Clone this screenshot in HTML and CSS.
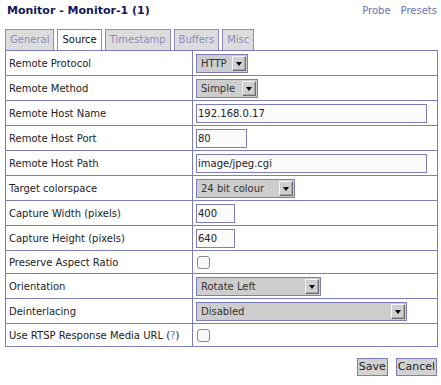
FILE: index.html
```html
<!DOCTYPE html>
<html lang="en">

<head>
  <meta charset="UTF-8">
  <title>ZM - Monitor - Monitor-1</title>
  <link rel="stylesheet" href="styles.css">
</head>

<body>
  <div class="page">
    <div class="header">
      <h2>Monitor - Monitor-1 (1)</h2>
      <div class="links">
        <a href="#">Probe</a>
        <a href="#">Presets</a>
      </div>
    </div>
    <ul class="tabs">
      <li><a href="#">General</a></li>
      <li class="active"><a href="#">Source</a></li>
      <li><a href="#">Timestamp</a></li>
      <li><a href="#">Buffers</a></li>
      <li><a href="#">Misc</a></li>
    </ul>
    <form>
      <table class="content">
        <tr>
          <td class="label">Remote Protocol</td>
          <td>
            <span class="select w-protocol"><select><option>HTTP</option><option>RTSP</option></select></span>
          </td>
        </tr>
        <tr>
          <td class="label">Remote Method</td>
          <td>
            <span class="select w-method"><select><option>Simple</option><option>Regexp</option></select></span>
          </td>
        </tr>
        <tr>
          <td class="label">Remote Host Name</td>
          <td><input type="text" class="w-long" value="192.168.0.17"></td>
        </tr>
        <tr>
          <td class="label">Remote Host Port</td>
          <td><input type="text" class="w-port" value="80"></td>
        </tr>
        <tr>
          <td class="label">Remote Host Path</td>
          <td><input type="text" class="w-long" value="image/jpeg.cgi"></td>
        </tr>
        <tr>
          <td class="label">Target colorspace</td>
          <td>
            <span class="select w-colour"><select><option>24 bit colour</option><option>8 bit grey</option><option>32 bit colour</option></select></span>
          </td>
        </tr>
        <tr>
          <td class="label">Capture Width (pixels)</td>
          <td><input type="text" class="w-size" value="400"></td>
        </tr>
        <tr>
          <td class="label">Capture Height (pixels)</td>
          <td><input type="text" class="w-size" value="640"></td>
        </tr>
        <tr>
          <td class="label">Preserve Aspect Ratio</td>
          <td><input type="checkbox"></td>
        </tr>
        <tr>
          <td class="label">Orientation</td>
          <td>
            <span class="select w-orient"><select><option>Rotate Left</option><option>Normal</option><option>Rotate Right</option></select></span>
          </td>
        </tr>
        <tr>
          <td class="label">Deinterlacing</td>
          <td>
            <span class="select w-deint"><select><option>Disabled</option><option>Four field motion adaptive</option></select></span>
          </td>
        </tr>
        <tr>
          <td class="label">Use RTSP Response Media URL (<a href="#">?</a>)</td>
          <td><input type="checkbox"></td>
        </tr>
      </table>
      <div class="buttons">
        <button type="submit">Save</button>
        <button type="button">Cancel</button>
      </div>
    </form>
  </div>
</body>

</html>
```

FILE: styles.css
```css
body {
  margin: 0;
  font-family: "DejaVu Sans", Verdana, sans-serif;
  font-size: 10px;
  color: #222;
  background-color: white;
}

a {
  color: #6a72b4;
  text-decoration: none;
}

.page {
  padding: 0 4px 0 5px;
}

.header {
  display: flex;
  justify-content: space-between;
  align-items: center;
  height: 20px;
}

.header h2 {
  margin: 0;
  padding-left: 2px;
  font-size: 11px;
  font-weight: bold;
  color: #16165a;
}

.links {
  display: flex;
  gap: 10px;
}

.tabs {
  display: flex;
  gap: 3px;
  list-style: none;
  margin: 9px 0 0;
  padding: 0;
}

.tabs li {
  border: 1px solid #8c8cc0;
  border-bottom: none;
  background-color: #dcdcdc;
  line-height: 20px;
  padding: 0 4px;
}

.tabs li a {
  color: #8c8cc0;
}

.tabs li.active {
  background-color: white;
}

.tabs li.active a {
  color: #111;
}

.content {
  width: 433px;
  border-collapse: collapse;
}

.content td {
  border: 1px solid #7d7dbb;
  padding: 3px 3px 2px;
  vertical-align: middle;
}

.content td.label {
  width: 180px;
}

input[type="text"] {
  display: block;
  box-sizing: border-box;
  height: 19px;
  margin: 0;
  padding: 0 1px;
  border: 1px solid #7d7dbb;
  background-color: #fbfbfb;
  font-family: inherit;
  font-size: 10px;
  color: #222;
}

input[type="checkbox"] {
  display: block;
  appearance: none;
  box-sizing: border-box;
  width: 13px;
  height: 13px;
  margin: 2px 1px;
  border: 1px solid #8a8a8a;
  border-radius: 3px;
  background-color: #f8f8f8;
}

.select {
  position: relative;
  display: block;
  box-sizing: border-box;
  height: 19px;
}

.select select {
  appearance: none;
  box-sizing: border-box;
  width: 100%;
  height: 19px;
  margin: 0;
  padding: 0 0 0 4px;
  border: 1px solid #7d7dbb;
  border-radius: 0;
  background-color: #cdcdcd;
  font-family: inherit;
  font-size: 10px;
  color: #333;
}

/* arrow button drawn over the right end of the select */
.select::before {
  content: "";
  position: absolute;
  top: 2px;
  right: 2px;
  box-sizing: border-box;
  width: 14px;
  height: 15px;
  background-color: #cfcfcf;
  border-top: 1px solid #f4f4f4;
  border-left: 1px solid #f4f4f4;
  border-right: 1px solid #6e6e6e;
  border-bottom: 1px solid #6e6e6e;
  box-shadow: inset -1px -1px 0 #a8a8a8;
  pointer-events: none;
}

.select::after {
  content: "";
  position: absolute;
  top: 8px;
  right: 6px;
  border-left: 3px solid transparent;
  border-right: 3px solid transparent;
  border-top: 4px solid #000;
  pointer-events: none;
}

.w-protocol { width: 52px; }
.w-method { width: 62px; }
.w-colour { width: 99px; }
.w-orient { width: 125px; }
.w-deint { width: 211px; }
.w-long { width: 231px; }
.w-port { width: 51px; }
.w-size { width: 39px; }

.buttons {
  display: flex;
  justify-content: flex-end;
  gap: 8px;
  margin-top: 11px;
}

.buttons button {
  height: 18px;
  margin: 0;
  padding: 0 1px;
  border: 1px solid #7d7dbb;
  border-radius: 0;
  background-color: #d2d2d2;
  font-family: inherit;
  font-size: 11px;
  color: #222;
  line-height: 14px;
}
```
